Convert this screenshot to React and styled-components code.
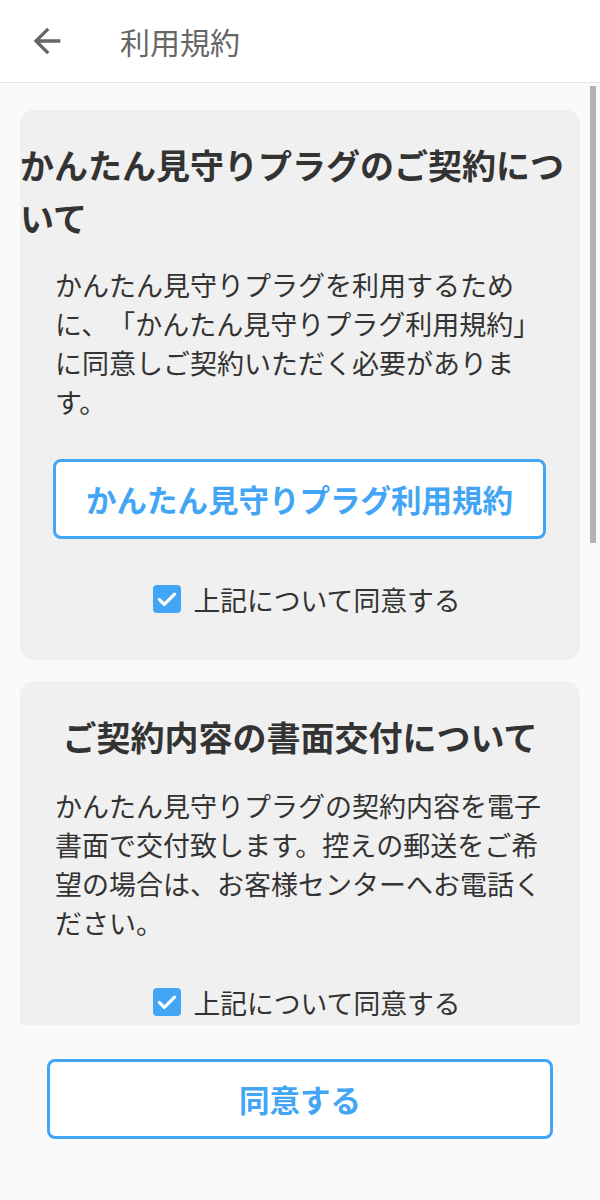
import styled, { createGlobalStyle } from 'styled-components'

const GlobalStyle = createGlobalStyle`
  body {
    margin: 0;
    font-family: "Noto Sans CJK JP", "Noto Sans", sans-serif;
    color: #333;
    text-spacing-trim: space-all;
  }
`

const BLUE = '#42a5f5'

const Page = styled.div`
  display: flex;
  flex-direction: column;
  width: 600px;
  height: 1200px;
  background: #fafafa;
  overflow: hidden;
`

const Header = styled.header`
  display: flex;
  align-items: center;
  height: 82px;
  padding-left: 27px;
  background: #fff;
  border-bottom: 1px solid #e4e4e4;
  flex-shrink: 0;

  svg {
    width: 40px;
    height: 40px;
    fill: #666;
  }
`

const HeaderTitle = styled.h1`
  margin: 0 0 0 53px;
  font-size: 30px;
  font-weight: 400;
  color: #666;
`

const Scroll = styled.main`
  position: relative;
  height: 942px;
  flex-shrink: 0;
  overflow: hidden;
  padding: 27px 20px 0;
  box-sizing: border-box;
  display: flex;
  flex-direction: column;
  gap: 21px;
`

const ScrollThumb = styled.div`
  position: absolute;
  top: 3px;
  right: 4px;
  width: 6px;
  height: 457px;
  background: #b3b3b3;
`

const Card = styled.section`
  flex-shrink: 0;
  background: #f0f0f0;
  border-radius: 14px;
  padding: 28px 0 41px;
`

const CardTitle = styled.h2`
  margin: 0 0 21px;
  font-size: 34px;
  font-weight: 700;
  color: #333;
  line-height: ${p => (p.$center ? '56px' : '53px')};
  text-align: ${p => (p.$center ? 'center' : 'left')};
`

const Body = styled.p`
  margin: 0;
  padding: 0 35px;
  font-size: 27px;
  line-height: 39px;
  color: #333;
`

const OutlineButton = styled.button`
  display: block;
  box-sizing: border-box;
  width: ${p => p.$width};
  height: 80px;
  margin: ${p => p.$margin};
  background: #fff;
  border: 3px solid ${BLUE};
  border-radius: 8px;
  color: ${BLUE};
  font-family: inherit;
  font-size: 30.5px;
  font-weight: 700;
  cursor: pointer;
`

const CheckRow = styled.label`
  display: flex;
  align-items: center;
  justify-content: center;
  gap: 12px;
  height: 40px;
  margin-top: 40px;
  padding-left: 14px;
  font-size: 26.8px;
  color: #333;
`

const CheckBox = styled.span`
  display: flex;
  align-items: center;
  justify-content: center;
  width: 28px;
  height: 28px;
  border-radius: 4px;
  background: ${BLUE};

  svg {
    width: 26px;
    height: 26px;
  }
`

const Footer = styled.footer`
  flex: 1;
  padding: 34px 47px 0;
  background: #fafafa;
`

const Check = ({ children }) => (
  <CheckRow>
    <CheckBox>
      <svg viewBox="0 0 24 24" fill="none" stroke="#fff" strokeWidth="3" strokeLinecap="round" strokeLinejoin="round">
        <path d="M5 12.5l4.5 4.5L19 7.5" />
      </svg>
    </CheckBox>
    {children}
  </CheckRow>
)

export default function App() {
  return (
    <Page>
      <GlobalStyle />
      <Header>
        <svg viewBox="0 0 24 24">
          <path d="M20 11H7.83l5.59-5.59L12 4l-8 8 8 8 1.41-1.41L7.83 13H20v-2z" />
        </svg>
        <HeaderTitle>利用規約</HeaderTitle>
      </Header>

      <Scroll>
        <Card>
          <CardTitle>かんたん見守りプラグのご契約について</CardTitle>
          <Body>
            かんたん見守りプラグを利用するために、「かんたん見守りプラグ利用規約」に同意しご契約いただく必要があります。
          </Body>
          <OutlineButton $width="493px" $margin="38px 0 0 33px">かんたん見守りプラグ利用規約</OutlineButton>
          <Check>上記について同意する</Check>
        </Card>

        <Card>
          <CardTitle $center>ご契約内容の書面交付について</CardTitle>
          <Body>
            かんたん見守りプラグの契約内容を電子書面で交付致します。控えの郵送をご希望の場合は、お客様センターへお電話ください。
          </Body>
          <Check>上記について同意する</Check>
        </Card>

        <ScrollThumb />
      </Scroll>

      <Footer>
        <OutlineButton $width="100%" $margin="0">同意する</OutlineButton>
      </Footer>
    </Page>
  )
}
